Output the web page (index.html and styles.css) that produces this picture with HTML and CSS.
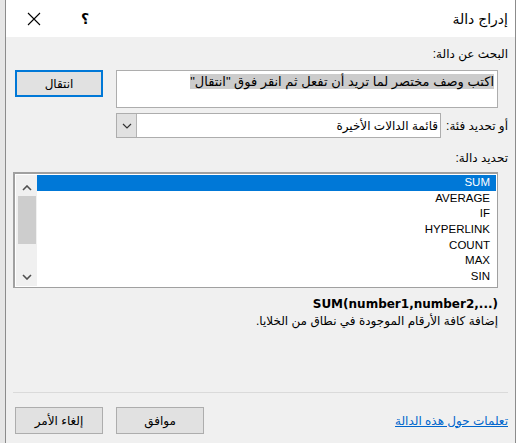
FILE: index.html
```html
<!DOCTYPE html>
<html lang="ar" dir="rtl">
<head>
  <meta charset="UTF-8">
  <title>إدراج دالة</title>
  <link rel="stylesheet" href="styles.css">
</head>
<body>

  <div class="dialog">
    <div class="title-bar">
      <span class="title">إدراج دالة</span>
      <span class="help">؟</span>
      <span class="close">
        <svg width="14" height="14" viewBox="0 0 14 14"><path d="M1 1 L13 13 M13 1 L1 13" stroke="#000" stroke-width="1.1" fill="none"/></svg>
      </span>
    </div>

    <div class="content">
      <div class="label">البحث عن دالة:</div>
      <div class="search-row">
        <div class="search-box"><span class="selected-text">اكتب وصف مختصر لما تريد أن تفعل ثم انقر فوق "انتقال"</span></div>
        <button class="btn btn-default">انتقال</button>
      </div>

      <div class="category-row">
        <span class="category-label">أو تحديد فئة:</span>
        <div class="select">
          <span class="select-text">قائمة الدالات الأخيرة</span>
          <span class="select-arrow">
            <svg width="10" height="6" viewBox="0 0 10 6"><path d="M1 1 L5 5 L9 1" stroke="#333" stroke-width="1.2" fill="none"/></svg>
          </span>
        </div>
      </div>

      <div class="label label-list">تحديد دالة:</div>
      <div class="listbox">
        <ul class="items">
          <li class="active">SUM</li>
          <li>AVERAGE</li>
          <li>IF</li>
          <li>HYPERLINK</li>
          <li>COUNT</li>
          <li>MAX</li>
          <li>SIN</li>
        </ul>
        <div class="scrollbar">
          <svg class="arrow" width="10" height="6" viewBox="0 0 10 6"><path d="M1 5 L5 1 L9 5" stroke="#505050" stroke-width="1.6" fill="none"/></svg>
          <div class="thumb"></div>
          <svg class="arrow arrow-down" width="10" height="6" viewBox="0 0 10 6"><path d="M1 1 L5 5 L9 1" stroke="#505050" stroke-width="1.6" fill="none"/></svg>
        </div>
      </div>

      <div class="syntax">SUM(number1,number2,...)</div>
      <div class="description">إضافة كافة الأرقام الموجودة في نطاق من الخلايا.</div>

      <div class="separator"></div>

      <div class="footer">
        <a href="#" class="help-link">تعلمات حول هذه الدالة</a>
        <div class="footer-buttons">
          <button class="btn">موافق</button>
          <button class="btn">إلغاء الأمر</button>
        </div>
      </div>
    </div>
  </div>

</body>
</html>
```

FILE: styles.css
```css
body {
  margin: 0;
  background-color: #e6e6e6;
  font-family: "Liberation Sans", "DejaVu Sans", sans-serif;
  font-size: 12px;
  color: #000;
}

.dialog {
  margin-left: 2px;
  width: 509px;
  height: 443px;
  border-left: 1px solid #8c8c8c;
  border-right: 1px solid #8c8c8c;
  background-color: #f0f0f0;
  overflow: hidden;
}

.title-bar {
  height: 37px;
  background-color: #fff;
  display: flex;
  align-items: center;
  padding-right: 7px;
}

.title {
  font-size: 14px;
  flex: 1;
}

.help {
  width: 20px;
  text-align: center;
  font-size: 14px;
  font-weight: bold;
  margin-left: 34px;
}

.close {
  width: 14px;
  height: 14px;
  margin-left: 21px;
  display: flex;
}

.content {
  padding: 9px 7px 0 7px;
}

.label {
  height: 16px;
  line-height: 16px;
}

.search-row {
  display: flex;
  align-items: flex-start;
  gap: 13px;
  margin: 8px 10px 0 0;
  padding-left: 2px;
}

.search-box {
  flex: 1;
  height: 36px;
  border: 1px solid #adadad;
  background-color: #fff;
  padding: 0 3px;
  line-height: 22px;
  font-size: 13px;
}

.selected-text {
  background-color: #cccccc;
}

.btn {
  flex: none;
  width: 88px;
  height: 27px;
  background-color: #e1e1e1;
  border: 1px solid #adadad;
  font-family: inherit;
  font-size: 12px;
  color: #000;
  padding: 0;
}

.btn-default {
  border: 2px solid #0078d7;
}

.category-row {
  display: flex;
  align-items: center;
  gap: 5px;
  margin-top: 5px;
  padding-left: 103px;
}

.select {
  flex: 1;
  height: 23px;
  border: 1px solid #adadad;
  background-color: #fff;
  display: flex;
  align-items: center;
}

.select-text {
  flex: 1;
  padding-right: 2px;
}

.select-arrow {
  width: 19px;
  height: 23px;
  background-color: #e1e1e1;
  border-right: 1px solid #b4b4b4;
  display: flex;
  align-items: center;
  justify-content: center;
}

.label-list {
  margin-top: 12px;
}

.listbox {
  margin: 6px 10px 0 0;
  height: 111px;
  border-style: solid;
  border-width: 2px 1px 1px 2px;
  border-color: #a0a0a0;
  background-color: #fff;
  display: flex;
  padding: 1px;
}

.items {
  list-style: none;
  margin: 0;
  padding: 0;
  flex: 1;
  font-size: 11.5px;
}

.items li {
  height: 15.7px;
  line-height: 15.7px;
  padding-right: 6px;
  direction: ltr;
  text-align: right;
}

.items li.active {
  background-color: #0078d7;
  color: #fff;
}

.scrollbar {
  width: 21px;
  background-color: #f0f0f0;
  display: flex;
  flex-direction: column;
  align-items: center;
  padding-top: 10px;
}

.thumb {
  width: 18px;
  height: 48px;
  background-color: #cdcdcd;
  margin-top: 5px;
}

.arrow-down {
  margin-top: auto;
  margin-bottom: 6px;
}

.syntax {
  font-weight: bold;
  margin: 9px 10px 0 0;
  direction: ltr;
  text-align: right;
  font-size: 12px;
  font-family: "DejaVu Sans", sans-serif;
}

.description {
  margin: 3px 10px 0 0;
}

.separator {
  height: 1px;
  background-color: #dadada;
  margin-top: 64px;
}

.footer {
  display: flex;
  align-items: center;
  justify-content: space-between;
  margin-top: 14px;
  padding-left: 2px;
}

.help-link {
  color: #0066cc;
  text-decoration: underline;
}

.footer-buttons {
  display: flex;
  gap: 13px;
}
```
